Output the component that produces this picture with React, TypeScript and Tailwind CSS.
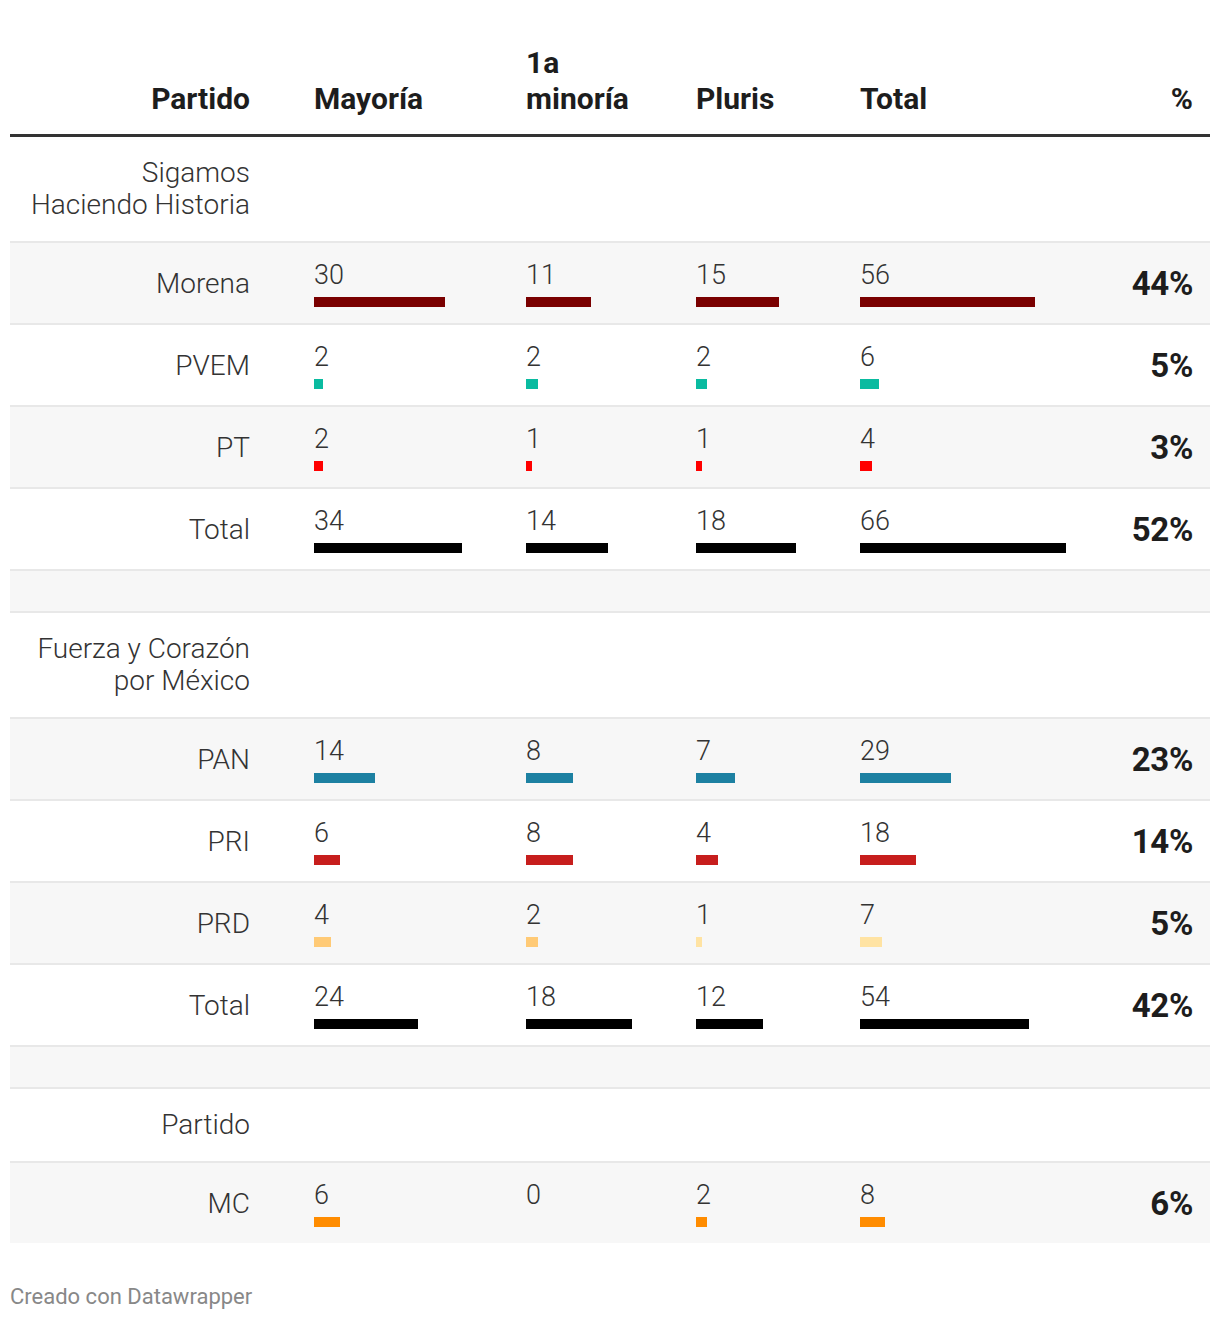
import React from 'react';

type Row =
  | { kind: 'group'; label: string[] }
  | { kind: 'spacer' }
  | { kind: 'data'; name: string; values: number[]; pct: string; color: string; light?: number[] };

const scales = [148 / 34, 106 / 18, 100 / 18, 206 / 66];

const rows: Row[] = [
  { kind: 'group', label: ['Sigamos', 'Haciendo Historia'] },
  { kind: 'data', name: 'Morena', values: [30, 11, 15, 56], pct: '44%', color: '#7a0000' },
  { kind: 'data', name: 'PVEM', values: [2, 2, 2, 6], pct: '5%', color: '#0abba0' },
  { kind: 'data', name: 'PT', values: [2, 1, 1, 4], pct: '3%', color: '#ff0000' },
  { kind: 'data', name: 'Total', values: [34, 14, 18, 66], pct: '52%', color: '#000000' },
  { kind: 'spacer' },
  { kind: 'group', label: ['Fuerza y Corazón', 'por México'] },
  { kind: 'data', name: 'PAN', values: [14, 8, 7, 29], pct: '23%', color: '#1d81a2' },
  { kind: 'data', name: 'PRI', values: [6, 8, 4, 18], pct: '14%', color: '#c71e1d' },
  { kind: 'data', name: 'PRD', values: [4, 2, 1, 7], pct: '5%', color: '#ffca76', light: [2, 3] },
  { kind: 'data', name: 'Total', values: [24, 18, 12, 54], pct: '42%', color: '#000000' },
  { kind: 'spacer' },
  { kind: 'group', label: ['Partido'] },
  { kind: 'data', name: 'MC', values: [6, 0, 2, 8], pct: '6%', color: '#ff8c00' },
];

const grid = 'grid grid-cols-[304px_212px_170px_164px_240px_1fr]';

function ValueCell({ value, width, color }: { value: number; width: number; color: string }) {
  return (
    <div className="flex flex-col justify-center">
      <div className="text-[27px] leading-[32px] font-light text-[#333333]">{value}</div>
      <div className="h-[10px] mt-[6px]">
        {value > 0 && <div className="h-[10px]" style={{ width, backgroundColor: color }} />}
      </div>
    </div>
  );
}

export default function App() {
  return (
    <div
      className="w-[1220px] bg-white px-[10px] pt-[45px] pb-[40px]"
      style={{ fontFamily: 'Roboto, "Liberation Sans", sans-serif' }}
    >
      <div className={`${grid} border-b-[3px] border-[#333333] text-[30px] leading-[36px] font-bold text-[#1d1d1d] items-end pb-[17px]`}>
        <div className="text-right pr-[64px]">Partido</div>
        <div>Mayoría</div>
        <div>
          1a
          <br />
          minoría
        </div>
        <div>Pluris</div>
        <div>Total</div>
        <div className="text-right pr-[17px]">%</div>
      </div>

      {rows.map((row, i) => {
        const bg = i % 2 === 1 ? 'bg-[#f7f7f7]' : 'bg-white';
        const border = i === rows.length - 1 ? '' : 'border-b-2 border-[#e8e8e8]';
        if (row.kind === 'spacer') {
          return <div key={i} className={`h-[42px] ${bg} ${border}`} />;
        }
        if (row.kind === 'group') {
          return (
            <div key={i} className={`${grid} ${bg} ${border} py-[20px]`}>
              <div className="text-right pr-[64px] text-[28px] leading-[32px] font-light text-[#333333]">
                {row.label.map((l) => (
                  <div key={l}>{l}</div>
                ))}
              </div>
            </div>
          );
        }
        return (
          <div key={i} className={`${grid} ${bg} ${border} py-[16px] items-center`}>
            <div className="text-right pr-[64px] text-[28px] leading-[32px] font-light text-[#333333] pt-[2px]">{row.name}</div>
            {row.values.map((v, j) => (
              <ValueCell
                key={j}
                value={v}
                width={v * scales[j]}
                color={row.light && row.light.includes(j) ? '#ffe3a3' : row.color}
              />
            ))}
            <div className="text-right pr-[17px] text-[33px] leading-[36px] font-bold text-[#1d1d1d] tracking-[-0.3px] pt-[2px]">{row.pct}</div>
          </div>
        );
      })}

      <div className="mt-[41px] text-[22px] leading-[26px] text-[#888888]">Creado con Datawrapper</div>
    </div>
  );
}
